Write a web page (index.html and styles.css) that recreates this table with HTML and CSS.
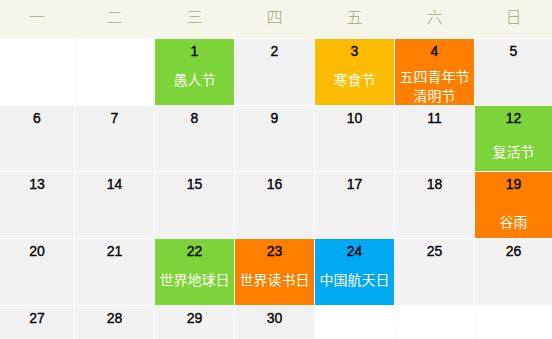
FILE: index.html
```html
<!DOCTYPE html>
<html lang="zh">
<head>
<meta charset="utf-8">
<link rel="stylesheet" href="styles.css">
</head>
<body>
<div class="cal">
  <div class="hd">一</div><div class="hd">二</div><div class="hd">三</div><div class="hd">四</div><div class="hd">五</div><div class="hd">六</div><div class="hd">日</div>

  <div class="day empty"></div>
  <div class="day empty"></div>
  <div class="day green"><span class="num">1</span><span class="fest">愚人节</span></div>
  <div class="day"><span class="num">2</span></div>
  <div class="day yellow"><span class="num">3</span><span class="fest">寒食节</span></div>
  <div class="day orange"><span class="num">4</span><span class="fest two">五四青年节<br>清明节</span></div>
  <div class="day"><span class="num">5</span></div>

  <div class="day"><span class="num">6</span></div>
  <div class="day"><span class="num">7</span></div>
  <div class="day"><span class="num">8</span></div>
  <div class="day"><span class="num">9</span></div>
  <div class="day"><span class="num">10</span></div>
  <div class="day"><span class="num">11</span></div>
  <div class="day green"><span class="num">12</span><span class="fest low">复活节</span></div>

  <div class="day"><span class="num">13</span></div>
  <div class="day"><span class="num">14</span></div>
  <div class="day"><span class="num">15</span></div>
  <div class="day"><span class="num">16</span></div>
  <div class="day"><span class="num">17</span></div>
  <div class="day"><span class="num">18</span></div>
  <div class="day orange"><span class="num">19</span><span class="fest lower">谷雨</span></div>

  <div class="day"><span class="num">20</span></div>
  <div class="day"><span class="num">21</span></div>
  <div class="day green"><span class="num">22</span><span class="fest">世界地球日</span></div>
  <div class="day orange"><span class="num">23</span><span class="fest">世界读书日</span></div>
  <div class="day blue"><span class="num">24</span><span class="fest">中国航天日</span></div>
  <div class="day"><span class="num">25</span></div>
  <div class="day"><span class="num">26</span></div>

  <div class="day"><span class="num">27</span></div>
  <div class="day"><span class="num">28</span></div>
  <div class="day"><span class="num">29</span></div>
  <div class="day"><span class="num">30</span></div>
  <div class="day empty"></div>
  <div class="day empty"></div>
  <div class="day empty"></div>
</div>
</body>
</html>
```

FILE: styles.css
```css
html, body {
  margin: 0;
  padding: 0;
  background: #ffffff;
}
body {
  font-family: "Liberation Sans", Arial, "Noto Sans CJK SC", sans-serif;
  width: 552px;
  height: 339px;
  overflow: hidden;
}
.cal {
  display: grid;
  grid-template-columns: 74px repeat(5, 79px) 77px;
  grid-template-rows: 38px 66px 65px 66px 66px 33px;
  column-gap: 1px;
  row-gap: 1px;
  background: #fbfbfa;
}
.hd {
  background: #f5f5e9;
  color: #a6a684;
  font-family: "Noto Sans CJK SC", sans-serif;
  font-size: 16px;
  line-height: 33px;
  text-align: center;
  font-weight: 300;
}
.day {
  background: #f2f2f2;
  display: flex;
  flex-direction: column;
  align-items: center;
  padding-top: 4px;
  box-sizing: border-box;
}
.day.empty { background: #ffffff; }
.day.green { background: #7dd43a; }
.day.yellow { background: #fdbb00; }
.day.orange { background: #fe7f00; }
.day.blue { background: #00a9f1; }
.num {
  font-size: 14px;
  line-height: 17px;
  color: #000000;
  font-weight: normal;
  -webkit-text-stroke: 0.35px #000000;
}
.fest {
  margin-top: 10px;
  font-family: "Noto Sans CJK SC", sans-serif;
  font-size: 14px;
  line-height: 18px;
  color: #fffcf0;
  text-align: center;
  white-space: nowrap;
}
.fest.two {
  margin-top: 7px;
  line-height: 19px;
}
.fest.low { margin-top: 15px; }
.fest.lower { margin-top: 19px; }
```
